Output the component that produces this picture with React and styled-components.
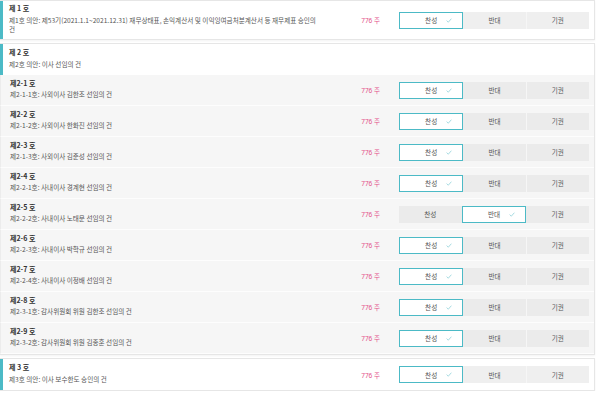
import React from 'react'
import styled, {createGlobalStyle} from 'styled-components'

const GlobalStyle = createGlobalStyle`
  html, body {
    margin: 0;
    padding: 0;
    background: #fff;
  }
  body {
    font-family: "Noto Sans CJK KR", "Noto Sans", sans-serif;
    color: #555;
  }
`

const TEAL = '#4cbac6'

const Page = styled.div`
  width: 595px;
  display: flex;
  flex-direction: column;
`
const Card = styled.div`
  background: #fff;
  border: 1px solid #e6e6e6;
  border-left: none;
  box-shadow: 0 1px 2px rgba(0, 0, 0, 0.05);
  margin-bottom: ${props => props.$gap || 0}px;
`
const Row = styled.div`
  display: flex;
  align-items: center;
  box-sizing: border-box;
  height: ${props => props.$height}px;
  padding-right: 5px;
  background: ${props => (props.$sub ? '#f6f6f6' : '#fff')};
  border-left: ${props => (props.$sub ? '1px solid #ececec' : `3px solid ${TEAL}`)};
  border-bottom: ${props => (props.$sub ? '1px solid #fdfdfd' : 'none')};
`
const Info = styled.div`
  flex: 1;
  padding-left: ${props => (props.$sub ? 9 : 6)}px;
  min-width: 0;
`
const Title = styled.div`
  font-size: 7px;
  line-height: 7px;
  font-weight: 700;
  color: #333;
`
const Desc = styled.div`
  margin-top: 3.5px;
  font-size: 6.6px;
  line-height: 9.6px;
  color: #555;
  white-space: nowrap;
`
const Amount = styled.div`
  width: 40px;
  margin-right: 19px;
  text-align: right;
  font-family: "Noto Sans", "Noto Sans CJK KR", sans-serif;
  font-size: 6.5px;
  color: #e3528a;
  white-space: nowrap;
`
const VoteGroup = styled.div`
  display: flex;
  width: 190px;
  height: 17px;
`
const VoteButton = styled.div`
  position: relative;
  flex: 1;
  box-sizing: border-box;
  display: flex;
  align-items: center;
  justify-content: center;
  font-size: 6.6px;
  color: #555;
  background: ${props => (props.$active ? '#fff' : props.$sub ? '#ebebeb' : '#efefef')};
  border: ${props => (props.$active ? `1px solid ${TEAL}` : 'none')};
  border-left: ${props =>
    props.$active ? `1px solid ${TEAL}` : props.$divider ? '1px solid #f6f6f6' : 'none'};
`
const Check = styled.svg`
  position: absolute;
  right: 10px;
  top: 50%;
  margin-top: -2.5px;
  width: 6px;
  height: 5px;
`

const OPTIONS = ['찬성', '반대', '기권']

const VoteButtons = ({choice, sub}) => (
  <VoteGroup>
    {OPTIONS.map((label, i) => {
      const active = label === choice
      const prevActive = i > 0 && OPTIONS[i - 1] === choice
      return (
        <VoteButton key={label} $active={active} $sub={sub} $divider={i > 0 && !prevActive}>
          {label}
          {active && (
            <Check viewBox="0 0 6 5">
              <path d="M0.6 2.6 L2.3 4.2 L5.4 0.7" fill="none" stroke="#8fd2d9" strokeWidth="0.8" />
            </Check>
          )}
        </VoteButton>
      )
    })}
  </VoteGroup>
)

const Item = ({title, lines, choice, sub, height}) => (
  <Row $sub={sub} $height={height}>
    <Info $sub={sub}>
      <Title>{title}</Title>
      <Desc>
        {lines.map(l => (
          <div key={l}>{l}</div>
        ))}
      </Desc>
    </Info>
    {choice && <Amount>776 주</Amount>}
    {choice && <VoteButtons choice={choice} sub={sub} />}
  </Row>
)

const subItems = [
  ['제2-1 호', '제2-1-1호: 사외이사 김한조 선임의 건', '찬성'],
  ['제2-2 호', '제2-1-2호: 사외이사 한화진 선임의 건', '찬성'],
  ['제2-3 호', '제2-1-3호: 사외이사 김준성 선임의 건', '찬성'],
  ['제2-4 호', '제2-2-1호: 사내이사 경계현 선임의 건', '찬성'],
  ['제2-5 호', '제2-2-2호: 사내이사 노태문 선임의 건', '반대'],
  ['제2-6 호', '제2-2-3호: 사내이사 박학규 선임의 건', '찬성'],
  ['제2-7 호', '제2-2-4호: 사내이사 이정배 선임의 건', '찬성'],
  ['제2-8 호', '제2-3-1호: 감사위원회 위원 김한조 선임의 건', '찬성'],
  ['제2-9 호', '제2-3-2호: 감사위원회 위원 김종훈 선임의 건', '찬성']
]

export default function App () {
  return (
    <Page>
      <GlobalStyle />
      <Card $gap={3}>
        <Item
          title="제 1 호"
          height={38}
          choice="찬성"
          lines={[
            '제1호 의안: 제53기(2021.1.1~2021.12.31) 재무상태표, 손익계산서 및 이익잉여금처분계산서 등 재무제표 승인의',
            '건'
          ]}
        />
      </Card>
      <Card $gap={3}>
        <Item title="제 2 호" height={31} lines={['제2호 의안: 이사 선임의 건']} />
        {subItems.map(([title, desc, choice]) => (
          <Item key={title} sub title={title} height={31} choice={choice} lines={[desc]} />
        ))}
      </Card>
      <Card>
        <Item title="제 3 호" height={31} choice="찬성" lines={['제3호 의안: 이사 보수한도 승인의 건']} />
      </Card>
    </Page>
  )
}
